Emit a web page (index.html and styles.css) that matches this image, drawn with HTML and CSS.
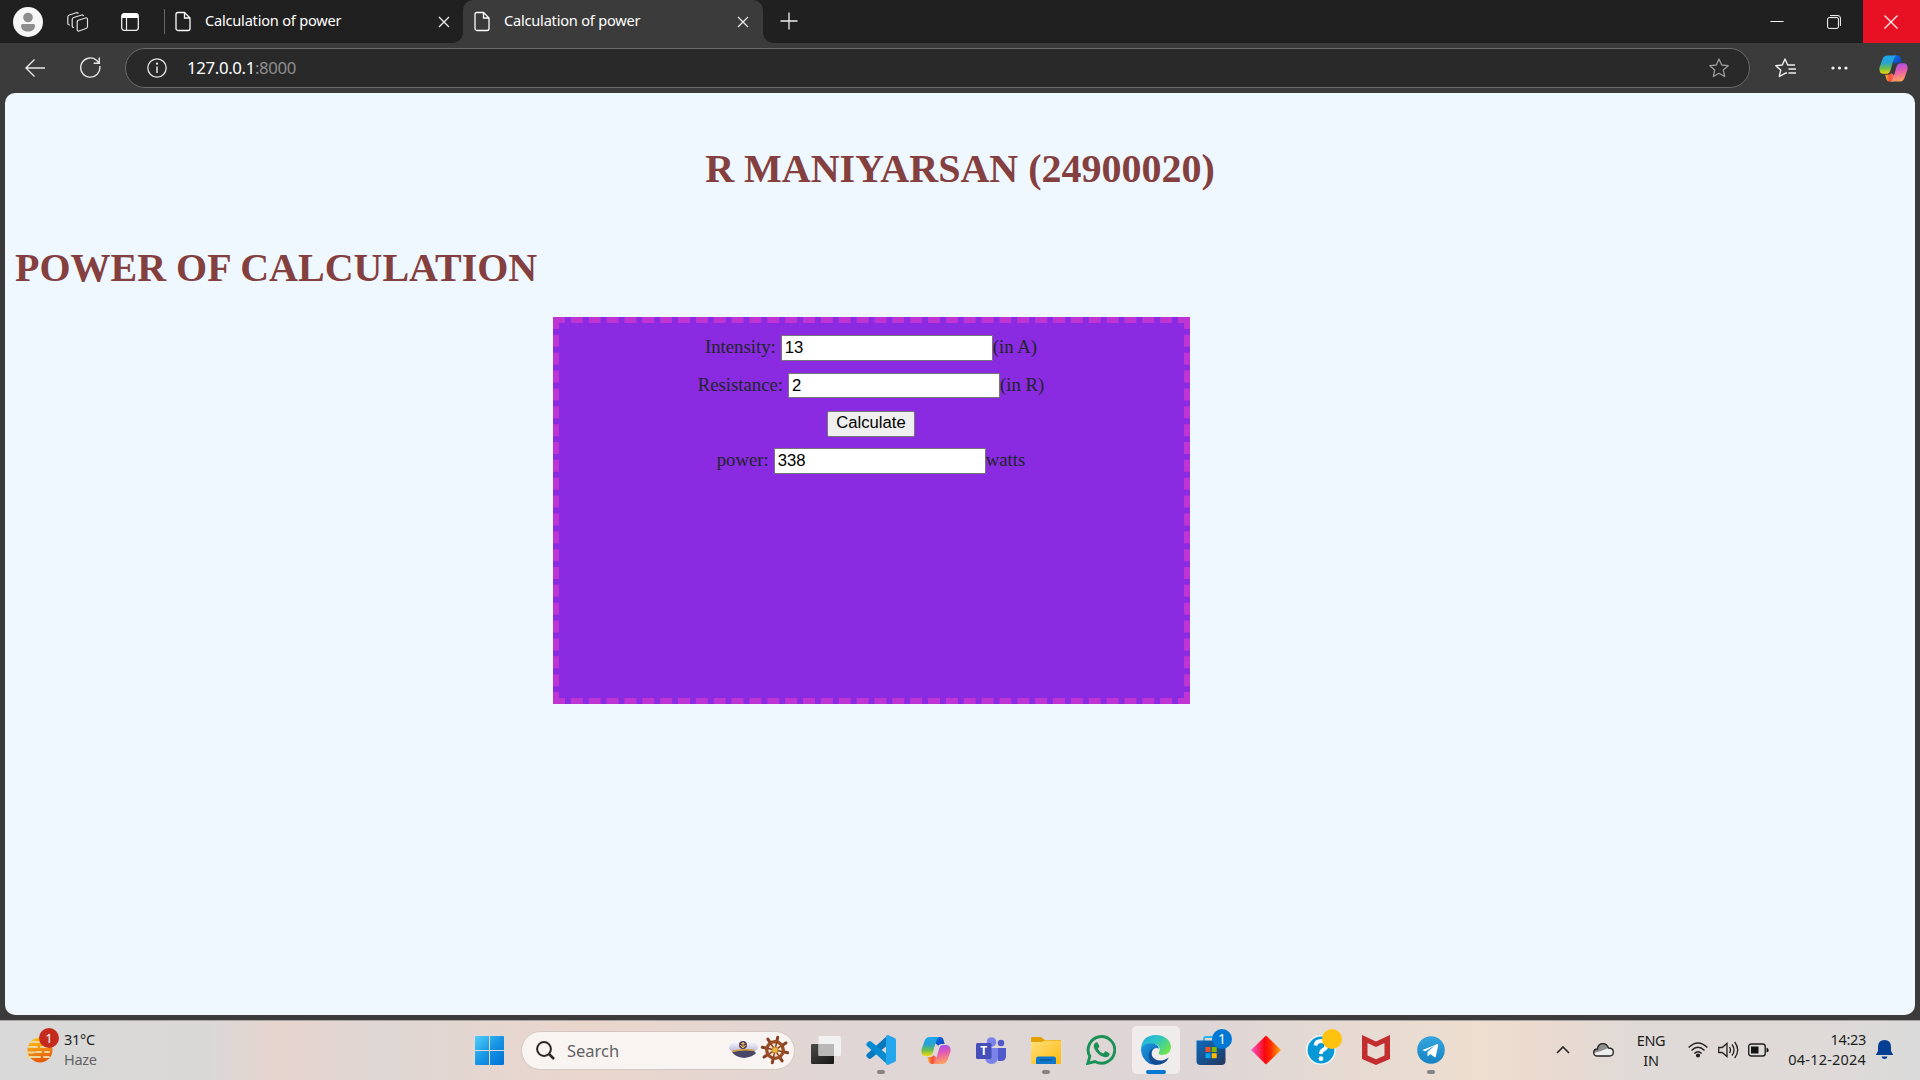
FILE: index.html
```html
<!DOCTYPE html>
<html lang="en">
<head>
<meta charset="utf-8">
<title>Calculation of power</title>
<link rel="stylesheet" href="styles.css">
</head>
<body>
<svg class="defs" width="0" height="0" aria-hidden="true">
  <defs>
    <linearGradient id="cpA" x1="0" y1="0" x2="0" y2="1"><stop offset="0" stop-color="#1ba5ee"/><stop offset=".4" stop-color="#2aa3cf"/><stop offset=".7" stop-color="#6cbd4b"/><stop offset="1" stop-color="#f5d60a"/></linearGradient>
    <linearGradient id="cpB" x1=".3" y1="0" x2=".5" y2="1"><stop offset="0" stop-color="#9a50ef"/><stop offset=".45" stop-color="#e75bb0"/><stop offset="1" stop-color="#ffa45c"/></linearGradient>
    <linearGradient id="cpC" x1="0" y1="0" x2="1" y2="1"><stop offset="0" stop-color="#1173e0"/><stop offset="1" stop-color="#0b3dbf"/></linearGradient>
    <linearGradient id="cpD" x1="0" y1="0" x2="1" y2="0"><stop offset="0" stop-color="#f7b62a"/><stop offset=".5" stop-color="#f2503a"/><stop offset="1" stop-color="#ff7d5c"/></linearGradient>
    <symbol id="page" viewBox="0 0 16 20"><path d="M1 3a2 2 0 0 1 2-2h6.500L15 6.500V17a2 2 0 0 1-2 2H3a2 2 0 0 1-2-2zM9.500 1v5.500H15" fill="none" stroke="#fff" stroke-width="1.300"/></symbol>
    <symbol id="cross" viewBox="0 0 12 12"><path d="M1 1l10 10M11 1L1 11" fill="none" stroke="#eee" stroke-width="1.300"/></symbol>
    <symbol id="copilot" viewBox="0 0 30 27">
      <path d="M15 0h4c2.300 0 3 1.200 3.600 3.200l1 3.800h-2.500c-1.800 0-3 .6-3.800 1.800L14 6z" fill="url(#cpC)"/>
      <path d="M15 27h-4c-2.300 0-3-1.200-3.600-3.200L6.400 20h2.500c1.800 0 3-.6 3.800-1.800L16 21z" fill="url(#cpD)"/>
      <path d="M9 0h9.500c-2 .5-2.700 2-3.300 4l-3.400 11.500c-.7 2.400-2 3.500-4.300 3.500H4.500C1 19-.2 15.500.7 12L3.500 4C4.500 1.200 6.200 0 9 0z" fill="url(#cpA)"/>
      <path d="M21 27h-9.500c2-.5 2.700-2 3.300-4l3.400-11.500C18.900 9.100 20.200 8 22.500 8h3c3.500 0 4.700 3.500 3.800 7l-2.800 8c-1 2.800-2.700 4-5.500 4z" fill="url(#cpB)"/>
    </symbol>
  </defs>
</svg>
<div class="screen">
  <header class="tabstrip">
    <div class="strip-tools">
      <svg class="avatar" width="30" height="30" viewBox="0 0 30 30"><circle cx="15" cy="15" r="15" fill="#f7f7f7"/><circle cx="15" cy="10.500" r="4.800" fill="#8d8d8d"/><path d="M8 18.500a1.500 1.500 0 0 1 1.500-1.500h11a1.500 1.500 0 0 1 1.500 1.500c0 4-3 6-7 6s-7-2-7-6z" fill="#8d8d8d"/></svg>
      <svg width="22" height="20" viewBox="0 0 22 20" fill="none" stroke="#dedede" stroke-width="1.200" stroke-linejoin="round"><path d="M10.500 8.500l8-2.500q2-.5 2 1.500v7q0 1.500-1.500 2l-7 2.500q-1.800.4-1.800-1.500V10q0-1 .8-1.500z"/><path d="M7 15.500q-1.800 0-1.800-1.600V7.500q0-1.500 1.500-2l8-2.500q1.600-.3 1.800 1.200"/><path d="M3 13Q.8 13 .8 11.500V5q0-1.500 1.500-2l7-2.300q1.600-.3 2 .9"/></svg>
      <svg width="18" height="18" viewBox="0 0 18 18"><rect x=".7" y=".7" width="16.600" height="16.600" rx="2.500" fill="none" stroke="#eee" stroke-width="1.300"/><path d="M1 5V2q0-1.500 1.500-1.500h13Q17 .5 17 2v3z" fill="#fff"/><path d="M5.500 5v12" stroke="#eee" stroke-width="1.200"/></svg>
      <span class="divider"></span>
    </div>
    <div class="tab">
      <svg width="16" height="21"><use href="#page"/></svg><span class="tab-title">Calculation of power</span><svg width="12" height="12"><use href="#cross"/></svg>
    </div>
    <div class="tab tab-active">
      <svg width="16" height="21"><use href="#page"/></svg><span class="tab-title">Calculation of power</span><svg width="12" height="12"><use href="#cross"/></svg>
    </div>
    <svg class="new-tab" width="18" height="18" viewBox="0 0 18 18"><path d="M9 .5v17M.5 9h17" stroke="#eee" stroke-width="1.300"/></svg>
    <div class="window-buttons">
      <span><svg width="14" height="14" viewBox="0 0 14 14"><path d="M.5 6.500h13" stroke="#fff"/></svg></span>
      <span><svg width="14" height="14" viewBox="0 0 14 14" fill="none" stroke="#fff"><rect x=".6" y="2.600" width="10.800" height="10.800" rx="1.500"/><path d="M3 .6h8q2.400 0 2.400 2.400v8"/></svg></span>
      <span class="window-close"><svg width="14" height="14" viewBox="0 0 14 14"><path d="M.5.500l13 13M13.500.500l-13 13" stroke="#fff" stroke-width="1.100"/></svg></span>
    </div>
  </header>

  <nav class="toolbar">
    <svg class="back" width="20" height="18" viewBox="0 0 20 18" fill="none" stroke="#e6e6e6" stroke-width="1.400"><path d="M20 9H1M9.500.600L1 9l8.500 8.400"/></svg>
    <svg class="reload" width="21" height="21" viewBox="0 0 21 21" fill="none" stroke="#e6e6e6" stroke-width="1.400"><path d="M19.800 9A9.600 9.600 0 1 1 16.500 3.200L19 5.800M19.300.5v5.700h-5.700"/></svg>
    <div class="address">
      <svg width="20" height="20" viewBox="0 0 20 20" fill="none" stroke="#e6e6e6" stroke-width="1.300"><circle cx="10" cy="10" r="9.200"/><path d="M10 8.500V15" stroke-width="1.500"/><circle cx="10" cy="5.700" r=".5"/></svg>
      <span class="url">127.0.0.1<span class="port">:8000</span></span>
      <svg width="20" height="20" viewBox="0 0 20 20" fill="none" stroke="#9b9b9b" stroke-width="1.300" stroke-linejoin="round"><path d="M10 1l2.700 6 6.500.700-4.900 4.400 1.400 6.400L10 15.300l-5.700 3.200 1.400-6.400L.8 7.700 7.300 7z"/></svg>
    </div>
    <svg class="favorites" width="21" height="20" viewBox="0 0 21 20" fill="none" stroke="#eee" stroke-width="1.400" stroke-linejoin="round"><path d="M12 15L10 15.300l-5.700 3.200 1.400-6.400L.8 7.700 7.300 7 10 1l2.700 6H20M13.500 11H21M13.500 15H21"/></svg>
    <svg class="more" width="17" height="4" viewBox="0 0 17 4" fill="#f2f2f2"><circle cx="2" cy="2" r="1.600"/><circle cx="8.500" cy="2" r="1.600"/><circle cx="15" cy="2" r="1.600"/></svg>
    <svg class="copilot" width="29" height="27"><use href="#copilot"/></svg>
  </nav>

  <main class="page">
    <h1 class="heading heading-name">R MANIYARSAN (24900020)</h1>
    <h1 class="heading">POWER OF CALCULATION</h1>
    <form class="calculator">
      <div class="field"><label for="intensity">Intensity:</label><input id="intensity" type="text" value="13"><span>(in A)</span></div>
      <div class="field"><label for="resistance">Resistance:</label><input id="resistance" type="text" value="2"><span>(in R)</span></div>
      <div class="field"><button type="button">Calculate</button></div>
      <div class="field"><label for="power">power:</label><input id="power" type="text" value="338"><span>watts</span></div>
    </form>
  </main>

  <footer class="taskbar">
    <div class="weather">
      <span class="weather-icon">
        <svg width="28" height="26" viewBox="0 0 28 26"><defs><linearGradient id="sun" x1="0" y1="0" x2=".3" y2="1"><stop offset="0" stop-color="#ffcf15"/><stop offset="1" stop-color="#e8590c"/></linearGradient></defs><circle cx="15" cy="13" r="12.500" fill="url(#sun)"/><path d="M6 5h8M4 10h8M16 10h8M11 15h5M20 15h4M1 15.500h8M1 20h14M19 20h5" stroke="#ead7a0" stroke-width="2" stroke-linecap="round"/></svg>
        <b class="alert">1</b>
      </span>
      <span class="weather-text"><span>31°C</span><span class="muted">Haze</span></span>
    </div>

    <div class="apps">
      <span class="app"><svg width="29" height="29" viewBox="0 0 29 29"><defs><linearGradient id="win" x1="0" y1="0" x2="1" y2="1"><stop offset="0" stop-color="#4fd0fb"/><stop offset=".5" stop-color="#1794e4"/><stop offset="1" stop-color="#0071d5"/></linearGradient></defs><path d="M1 0h13v14H0V1q0-1 1-1zM15 0h13q1 0 1 1v13H15zM0 15h14v14H1q-1 0-1-1zM15 15h14v13q0 1-1 1H15z" fill="url(#win)"/></svg></span>
      <div class="search">
        <svg width="19" height="19" viewBox="0 0 19 19" fill="none" stroke="#292929" stroke-width="2"><circle cx="8" cy="8" r="6.900"/><path d="M13 13l5 5" stroke-width="2.500"/></svg>
        <span class="search-text">Search</span>
        <svg width="60" height="30" viewBox="0 0 60 30">
          <defs><linearGradient id="cap" x1="0" y1="0" x2="0" y2="1"><stop offset="0" stop-color="#fff"/><stop offset="1" stop-color="#b9b5dc"/></linearGradient></defs>
          <path d="M0 12Q2 6 14 5.500q14 0 15 6.500-1 5-6 5H5Q0 16 0 12z" fill="url(#cap)"/>
          <path d="M3 17q10-3 21-2l3 3q-3 4-12 5-9-1-12-6z" fill="#4a4668"/><path d="M3 16.500q10-3 22-1" stroke="#d5a333" stroke-width="1.600" fill="none"/>
          <circle cx="14" cy="10" r="4" fill="#51405b"/><path d="M14 7v6M11.500 10q2.500 5 5 0M12.500 8.500h3" stroke="#f1c35a" fill="none"/>
          <g transform="translate(46 15)" stroke="#874120" fill="none"><path d="M0-13V13M-13 0H13M-9.200-9.200L9.200 9.200M9.200-9.200L-9.200 9.200" stroke-width="3" stroke-linecap="round" transform="rotate(12)"/><circle r="8.500" stroke="#eeddd0" fill="#f1e1d5"/><circle r="8.300" stroke="#9b4d26" stroke-width="3.300"/><path d="M0-8V8M-8 0H8M-5-5L5 5M5-5L-5 5" stroke-width="1.500" transform="rotate(12)"/><circle r="3" fill="#eab544" stroke="#cb8a20"/></g>
        </svg>
      </div>
      <span class="app"><svg width="30" height="30" viewBox="0 0 30 30"><defs><linearGradient id="tv" x1="0" y1="0" x2="1" y2="1"><stop offset="0" stop-color="#4a4a47"/><stop offset="1" stop-color="#171715"/></linearGradient></defs><rect x="0" y="9" width="23" height="20" rx="1" fill="url(#tv)"/><rect x="7.500" y="1" width="22.500" height="20" rx="1.500" fill="#f4f4f4" opacity=".9"/><path d="M7.500 9H23v12H7.500z" fill="#b9b8b7"/></svg></span>
      <span class="app app-running"><svg width="30" height="30" viewBox="0 0 30 30"><path d="M22 0L1 19q-1.500 1.500 0 3l1.500 1.500q1 .8 2.500 0L23 9z" fill="#0878bc"/><path d="M22 30L1 11q-1.500-1.500 0-3l1.500-1.500q1-.8 2.500 0L23 21z" fill="#078bd0"/><path d="M22 0l7 3.300q1 .6 1 2v19.400q0 1.400-1 2L22 30q-2 0-2-2V2q0-2 2-2z" fill="#24a6ef"/></svg></span>
      <span class="app"><svg width="30" height="27"><use href="#copilot"/></svg></span>
      <span class="app"><svg width="30" height="27" viewBox="0 0 30 27"><circle cx="15.500" cy="5" r="4.800" fill="#7b83eb"/><circle cx="25" cy="6" r="3.300" fill="#5059c9"/><path d="M20 11h10v8q0 5-5 5h-3z" fill="#5059c9"/><path d="M9 11h13v8q0 8-6.500 8T9 19z" fill="#7b83eb"/><rect y="6" width="15.500" height="16" rx="1.500" fill="#464eb8"/><text x="7.700" y="18" text-anchor="middle" class="teams-letter">T</text></svg></span>
      <span class="app app-running"><svg width="30" height="28" viewBox="0 0 30 28"><defs><linearGradient id="fold" x1="0" y1="0" x2="1" y2="1"><stop offset="0" stop-color="#ffe07b"/><stop offset="1" stop-color="#fbb90d"/></linearGradient></defs><path d="M0 2Q0 1 1 1h9l4 3h15q1 0 1 1v5H0z" fill="#e0a006"/><path d="M0 6h11l3-1.500h15q1 0 1 1V27q0 1-1 1H1q-1 0-1-1z" fill="url(#fold)"/><path d="M5 28v-5q0-2.500 2.500-2.500h15Q25 20.500 25 23v5z" fill="#1178c9"/><path d="M9 24h12" stroke="#084a91"/></svg></span>
      <span class="app"><svg width="30" height="30" viewBox="0 0 30 30"><path d="M1.800 28.300l2-7A13.300 13.300 0 1 1 9 26.500z" fill="none" stroke="#1c9156" stroke-width="2.900"/><path d="M9 8q2-1.500 3 .3l1.300 2.800q.2.800-.5 1.500l-1 1.200q1.800 3.500 5.500 4.800l1.500-1.800q.6-.7 1.300-.3l2.800 1.400q1 .5.600 1.800-.8 2.500-3.800 2.500-5 0-9.700-5.700Q6 11 9 8z" fill="#1c9156"/></svg></span>
      <span class="app app-active"><svg width="30" height="30" viewBox="0 0 30 30"><defs><linearGradient id="edgeA" x1="0" y1="0" x2="1" y2=".6"><stop offset="0" stop-color="#24a9e5"/><stop offset=".5" stop-color="#2cc4c6"/><stop offset="1" stop-color="#6ae44f"/></linearGradient><linearGradient id="edgeB" x1="0" y1="0" x2="1" y2="1"><stop offset="0" stop-color="#1b9de2"/><stop offset="1" stop-color="#1058ac"/></linearGradient></defs><path d="M0 14Q1 0 15 0c9 0 15 6 15 12 0 5-4 8-9 8-3 0-4-1.500-3-3 2-3 0-8-6-8Q4 9 0 14z" fill="url(#edgeA)"/><path d="M0 14Q3 8 10 8.500q7 0 8 5-5-2-7 3-2 7 5 12.500-6 2-11-3Q0 21 0 14z" fill="url(#edgeB)"/><path d="M13 13q-4 3-2 8 4 6 12 4l5-2.500Q24 30 15 30q-6-1-7-8-1-7 5-9z" fill="#124d92"/></svg></span>
      <span class="app"><svg width="30" height="30" viewBox="0 0 30 30"><defs><linearGradient id="store" x1="0" y1="0" x2="1" y2="1"><stop offset="0" stop-color="#0b6bbd"/><stop offset="1" stop-color="#24375f"/></linearGradient></defs><path d="M8 8V3.500Q8 2 9.500 2h11Q22 2 22 3.500V8" fill="none" stroke="#2ab4e8" stroke-width="1.800"/><path d="M.5 5.500h29V26q0 4-4 4h-21q-4 0-4-4z" fill="url(#store)"/><path d="M9.500 12h5v5h-5z" fill="#f25022"/><path d="M15.700 12h5v5h-5z" fill="#7fba00"/><path d="M9.500 18.200h5v5h-5z" fill="#00a4ef"/><path d="M15.700 18.200h5v5h-5z" fill="#ffb900"/></svg><b class="count">1</b></span>
      <span class="app"><svg width="30" height="30" viewBox="0 0 30 30"><defs><linearGradient id="dia"><stop offset="0" stop-color="#f95bd0"/><stop offset=".45" stop-color="#fb0712"/><stop offset=".65" stop-color="#ff2a00"/><stop offset="1" stop-color="#ffac0b"/></linearGradient></defs><path d="M15 .5L30 15 15 29.500 0 15z" fill="url(#dia)"/></svg></span>
      <span class="app"><svg width="30" height="30" viewBox="0 0 30 30"><circle cx="15" cy="15" r="14.200" fill="#0798d5" stroke="#f3f7f8" stroke-width="1.600"/><path d="M9.500 10.500Q10 6 15 6t5.500 4.500q0 3-3.500 4.500-2 1-2 4" fill="none" stroke="#fff" stroke-width="3.800"/><circle cx="15" cy="23.700" r="2.400" fill="#fff"/></svg><i class="dot"></i></span>
      <span class="app"><svg width="28" height="30" viewBox="0 0 28 30"><path d="M0 0l14 6.500L28 0v24l-14 6L0 24zM5.500 8v12.500l8.500 3.800 8.500-3.800V8L14 12z" fill="#c22d30" fill-rule="evenodd"/></svg></span>
      <span class="app app-running"><svg width="28" height="28" viewBox="0 0 28 28"><defs><linearGradient id="tg" x1="0" y1="0" x2="0" y2="1"><stop offset="0" stop-color="#35a5df"/><stop offset="1" stop-color="#1583c1"/></linearGradient></defs><circle cx="14" cy="14" r="13.800" fill="url(#tg)"/><path d="M5.500 14l15-6q1-.2.700 1.200l-2.500 11.500q-.4 1-1.400.4l-4-3-2 2q-.7.400-.8-.5v-3.600l7.500-6.700-9.500 6-3-1z" fill="#fff"/></svg></span>
    </div>

    <div class="tray">
      <svg class="chevron" width="14" height="8" viewBox="0 0 14 8"><path d="M1 7l6-6 6 6" fill="none" stroke="#222" stroke-width="1.600"/></svg>
      <svg class="cloud" width="21" height="14" viewBox="0 0 21 14"><path d="M4.500 13Q.7 13 .7 9.500T4.500 6Q5 .7 10 .7q4 0 5.500 4.300 4.800 0 4.800 4T16.500 13z" fill="#ededed"/><path d="M1 10Q0 6.500 4.500 6 5 .7 10 .7q4 0 5.500 4.300L8 8z" fill="#8e8e8e"/><path d="M4.500 13Q.7 13 .7 9.500T4.500 6Q5 .7 10 .7q4 0 5.500 4.300 4.800 0 4.800 4T16.500 13z" fill="none" stroke="#222" stroke-width="1.300"/></svg>
      <span class="language"><span>ENG</span><span>IN</span></span>
      <svg class="wifi" width="20" height="16" viewBox="0 0 20 16" fill="none" stroke="#222" stroke-width="1.400"><path d="M.6 5.500q9.400-9 18.800 0M3.500 8.500q6.500-6.400 13 0M6.400 11.500q3.600-3.600 7.200 0"/><circle cx="10" cy="13.500" r="1.400" fill="#222"/></svg>
      <svg class="volume" width="21" height="18" viewBox="0 0 21 18" fill="none" stroke="#222" stroke-width="1.300"><path d="M.7 6.500h3.500L9 2.500v13l-4.800-4H.7zM11.500 6q2 3 0 6M14 3.500q4 5.500 0 11M16.700 1q6 8 0 16"/></svg>
      <svg class="battery" width="21" height="14" viewBox="0 0 21 14"><rect x=".7" y="1" width="16.500" height="12" rx="2.500" fill="none" stroke="#222" stroke-width="1.400"/><path d="M3 3.500h7.500v7H3zM18.500 4.500L20.500 6v2.500l-2 1z" fill="#111"/></svg>
      <span class="clock"><span>14:23</span><span class="date">04-12-2024</span></span>
      <svg class="bell" width="17" height="19" viewBox="0 0 17 19"><path d="M8.500 0Q15 0 15 7v4l2 3.500v.5H0v-.500L2 11V7q0-7 6.500-7zM5.500 16.500h6q-.5 2.500-3 2.500t-3-2.500z" fill="#053f93"/></svg>
    </div>
  </footer>
</div>
</body>
</html>
```

FILE: styles.css
```css
* { box-sizing: border-box; }
body { margin: 0; overflow: hidden; font-family: "Noto Sans", "Open Sans", sans-serif; }
svg { display: block; flex: none; }
.defs { position: absolute; }
.screen { width: 1920px; height: 1080px; display: grid; grid-template-rows: 43px 50px 922px 65px; background: #3b3b3b; }

/* Tab strip */
.tabstrip { display: flex; align-items: center; background: #202020; color: #fff; }
.strip-tools { display: flex; align-items: center; padding-left: 13px; width: 165px; }
.strip-tools svg { margin-right: 32px; }
.strip-tools .avatar { margin-right: 24px; }
.strip-tools .divider { width: 1px; height: 25px; background: #666; margin-left: -7px; }
.tab { display: flex; align-items: center; width: 298px; height: 43px; padding: 0 13px 0 10px; font-size: 14.600px; }
.tab-title { flex: 1; margin: -4px 0 0 14px; white-space: nowrap; letter-spacing: -.22px; }
.tab-active { width: 300px; padding: 0 14px 0 11px; background: #3b3b3b; border-radius: 10px 10px 0 0; position: relative; }
.tab-active::before, .tab-active::after { content: ""; position: absolute; bottom: 0; width: 10px; height: 10px; }
.tab-active::before { left: -10px; background: radial-gradient(circle at 0 0, transparent 9.500px, #3b3b3b 10px); }
.tab-active::after { right: -10px; background: radial-gradient(circle at 100% 0, transparent 9.500px, #3b3b3b 10px); }
.new-tab { margin: -1px 0 0 17px; }
.window-buttons { display: flex; margin-left: auto; height: 43px; }
.window-buttons span { width: 57px; padding-right: 1px; display: grid; place-items: center; }
.window-buttons .window-close { background: #e81123; }

/* Toolbar */
.toolbar { display: flex; align-items: center; padding-left: 25px; }
.back, .reload { margin-top: -1px; }
.reload { margin-left: 35px; }
.address { display: flex; align-items: center; width: 1625px; height: 40px; margin-left: 24px; padding: 0 20px 0 21px; background: #292929; border: 1px solid #6a6a6a; border-radius: 20px; }
.url { flex: 1; margin: -2px 0 0 20px; color: #fff; font-size: 16.800px; letter-spacing: -.35px; }
.port { color: #8e8e8e; }
.favorites { margin-left: 25px; }
.more { margin: -1px 0 0 35px; }
.copilot { margin-left: 31px; }

/* Document */
.page { margin: 0 5px; padding: 27px 10px 0; overflow: hidden; background: #f0f8ff; border-radius: 10px; font-family: "Liberation Serif", serif; color: #212529; }
.heading { margin: 26px 0; font-size: 40px; line-height: 46px; font-weight: 700; color: #843f3f; }
.heading-name { margin-bottom: 53px; text-align: center; }
.calculator { width: 637px; height: 387px; margin: 0 0 0 538px; padding: 12px 1px 0 0; display: flex; flex-direction: column; gap: 12.300px; background: #8a2be2; border: 6px dashed #be35d3; font-size: 18.750px; }
.field { display: flex; justify-content: center; align-items: baseline; height: 25.500px; }
.field label { margin-right: 5px; }
.field input { width: 212px; height: 25.500px; padding: 1px 3px; border: 1px solid #767676; font: 16.667px "Liberation Sans", sans-serif; color: #000; background: #fff; }
.field button { width: 88px; height: 26.500px; padding: 0 0 2px; border: 1px solid #767676; border-radius: 2px; background: #efefef; color: #000; font: 16.667px "Liberation Sans", sans-serif; }

/* Taskbar */
.taskbar { margin-top: 5px; display: grid; grid-template-columns: 461px 997px 462px; align-items: center; border-top: 1px solid #aaa5a3; background: linear-gradient(90deg, #d9d9d9 0, #dad8d7 210px, #e7d4cf 280px, #dfd7d4 380px, #ead6cd 590px, #dfd6d5 850px, #ded6d6 1200px, #eddecf 1480px, #ecdacf 1530px, #dfdad7 1640px, #dfdad8 1800px, #dadada 1920px); color: #1e1e1e; font-size: 14.500px; }
.weather { display: flex; align-items: center; padding-left: 25px; }
.weather-icon { position: relative; margin-top: -1px; }
.alert { position: absolute; left: 14px; top: -9px; width: 20px; height: 20px; border-radius: 50%; background: #c42b1c; color: #fff; font-size: 13px; font-weight: 400; line-height: 20px; text-align: center; }
.weather-text { display: flex; flex-direction: column; line-height: 20px; margin: -4px 0 0 11px; letter-spacing: -.3px; }
.muted { color: #626262; }
.apps { display: flex; align-items: center; height: 57px; margin-top: -1px; }
.app { position: relative; width: 55px; height: 48px; display: grid; place-items: center; }
.app:first-child { padding-left: 1px; }
.app-running::after, .app-active::after { content: ""; position: absolute; bottom: 0; left: 24px; width: 8px; height: 4px; border-radius: 2px; background: #868282; }
.app-active { width: 48px; margin: 0 3px 0 4px; background: #f0ecec; border-radius: 5px; }
.app-active::after { left: 14px; width: 20px; background: #0078d4; }
.count, .dot { position: absolute; width: 20px; height: 20px; border-radius: 50%; left: 29px; top: 3px; }
.count { background: #0078d4; color: #fff; font-size: 14px; font-weight: 400; line-height: 20px; text-align: center; }
.dot { left: 29px; background: #ffc20e; }
.search { display: flex; align-items: center; width: 274px; height: 39px; margin: 0 3px 0 5px; padding: 0 5px 0 14px; background: #f8f4f2; border: 1px solid #d5c7c3; border-radius: 20px; }
.search-text { flex: 1; margin-left: 12px; color: #626262; font-size: 16.500px; }
.teams-letter { font: bold 12px "Open Sans", sans-serif; fill: #fff; }
.tray { display: flex; align-items: center; padding: 0 0 2px 98px; }
.cloud { margin-left: 23px; }
.language { width: 30px; margin-left: 22px; display: flex; flex-direction: column; align-items: center; line-height: 20px; letter-spacing: -.3px; }
.wifi { margin-left: 22px; }
.volume { margin-left: 10px; }
.battery { margin-left: 9px; }
.clock { display: flex; flex-direction: column; align-items: flex-end; width: 88px; margin: -2px 0 0 9px; line-height: 20px; white-space: nowrap; letter-spacing: -.3px; }
.date { letter-spacing: .2px; }
.bell { margin-left: 10px; }
```
